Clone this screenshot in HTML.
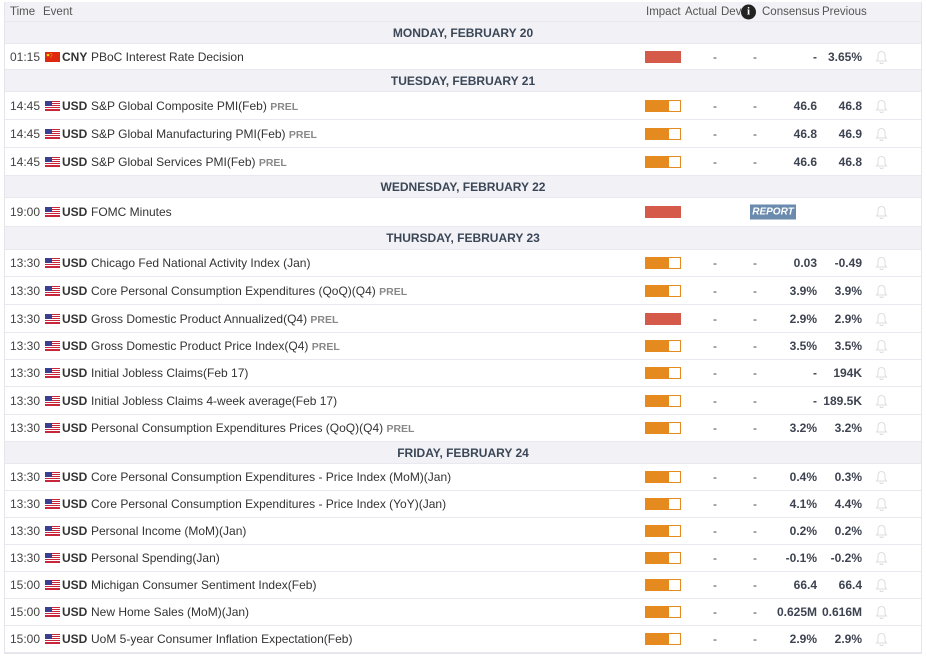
<!DOCTYPE html>
<html><head><meta charset="utf-8"><style>
*{margin:0;padding:0;box-sizing:border-box}
body{width:926px;height:657px;background:#fff;font-family:"Liberation Sans",Arial,sans-serif;color:#3d4350;position:relative;overflow:hidden}
.t{position:absolute;left:4px;width:918px;top:2px;height:652px;border:1px solid #e4e4ea;border-top:none}
.r{position:absolute;left:5px;width:916px;border-bottom:1px solid #e8e8ee}
.d{background:#f1f1f6;text-align:center;font-weight:bold;font-size:12px;color:#3b4756}
.h{background:#f1f1f6;font-size:11.5px;color:#555}
.c{position:absolute;top:50%;transform:translateY(-50%);white-space:nowrap;font-size:12px}
.h .c{font-size:11.5px}
.tm{left:5px;color:#444}
.fl{left:40px;width:15px;height:10px}
.cu{left:57px;font-weight:bold;color:#333}
.ev{left:86px;color:#333}
.ev b{color:#888;font-size:10.5px}
.bar{left:640px;width:36px;height:12px;border:1px solid #e58a1e;background:linear-gradient(90deg,#e58a1e 0 23px,#fff 23px)}
.bar.hi{background:#d55a4a;border-color:#d55a4a}
.a{left:705px;width:10px;text-align:center}
.dv{left:745px;width:10px;text-align:center}
.co{right:104px;text-align:right;font-weight:bold}
.pr{right:59px;text-align:right;font-weight:bold}
.bell{left:870px;width:13px;height:14px}
.rep{left:745px;width:46px;text-align:center;background:#6a8bad;color:#fff;font-style:italic;font-weight:bold;font-size:10px;padding:2px 0}
</style></head><body>
<div class="t"></div>
<div class="r h" style="top:2px;height:20px">
<span class="c" style="left:5px">Time</span><span class="c" style="left:38px">Event</span>
<span class="c" style="left:641px">Impact</span><span class="c" style="left:680px">Actual</span><span class="c" style="left:716px">Dev</span>
<span class="c" style="left:736px;width:15px;height:15px;border-radius:50%;background:#222;color:#fff;font-weight:bold;font-size:11px;text-align:center;line-height:15px;font-family:'Liberation Serif',serif">i</span>
<span class="c" style="left:757px">Consensus</span><span class="c" style="left:817px">Previous</span>
</div>
<div id="rows"></div>
<script>
const us='<svg class="c fl" viewBox="0 0 15 10"><rect width="15" height="10" fill="#fff"/><g fill="#c8263a"><rect y="0" width="15" height="1"/><rect y="2" width="15" height="1"/><rect y="4" width="15" height="1"/><rect y="6" width="15" height="1"/><rect y="8" width="15" height="1"/><rect y="9" width="15" height="1"/></g><rect width="7" height="5" fill="#3a3f8f"/></svg>';
const cn='<svg class="c fl" viewBox="0 0 15 10"><rect width="15" height="10" fill="#de2910"/><circle cx="3" cy="3" r="1.3" fill="#ffde00"/><circle cx="6" cy="1.5" r=".5" fill="#ffde00"/><circle cx="7" cy="3" r=".5" fill="#ffde00"/><circle cx="6" cy="5" r=".5" fill="#ffde00"/></svg>';
const bell='<svg class="c bell" viewBox="0 0 13 14"><path d="M6.5 1.5C4 1.5 3 3.5 3 6v3L1.5 11h10L10 9V6c0-2.5-1-4.5-3.5-4.5zM5 12.3a1.5 1.5 0 0 0 3 0" fill="none" stroke="#dcdcdc" stroke-width="1"/></svg>';
const R=[
['d',22,22,'MONDAY, FEBRUARY 20'],
['e',44,26,'01:15','CNY','PBoC Interest Rate Decision','',1,'-','3.65%'],
['d',70,22,'TUESDAY, FEBRUARY 21'],
['e',92,28,'14:45','USD','S&amp;P Global Composite PMI(Feb)','PREL',0,'46.6','46.8'],
['e',120,28,'14:45','USD','S&amp;P Global Manufacturing PMI(Feb)','PREL',0,'46.8','46.9'],
['e',148,28,'14:45','USD','S&amp;P Global Services PMI(Feb)','PREL',0,'46.6','46.8'],
['d',176,22,'WEDNESDAY, FEBRUARY 22'],
['e',198,29,'19:00','USD','FOMC Minutes','',1,'R',''],
['d',227,23,'THURSDAY, FEBRUARY 23'],
['e',250,27,'13:30','USD','Chicago Fed National Activity Index (Jan)','',0,'0.03','-0.49'],
['e',277,28,'13:30','USD','Core Personal Consumption Expenditures (QoQ)(Q4)','PREL',0,'3.9%','3.9%'],
['e',305,28,'13:30','USD','Gross Domestic Product Annualized(Q4)','PREL',1,'2.9%','2.9%'],
['e',333,27,'13:30','USD','Gross Domestic Product Price Index(Q4)','PREL',0,'3.5%','3.5%'],
['e',360,27,'13:30','USD','Initial Jobless Claims(Feb 17)','',0,'-','194K'],
['e',387,28,'13:30','USD','Initial Jobless Claims 4-week average(Feb 17)','',0,'-','189.5K'],
['e',415,27,'13:30','USD','Personal Consumption Expenditures Prices (QoQ)(Q4)','PREL',0,'3.2%','3.2%'],
['d',442,22,'FRIDAY, FEBRUARY 24'],
['e',464,27,'13:30','USD','Core Personal Consumption Expenditures - Price Index (MoM)(Jan)','',0,'0.4%','0.3%'],
['e',491,27,'13:30','USD','Core Personal Consumption Expenditures - Price Index (YoY)(Jan)','',0,'4.1%','4.4%'],
['e',518,27,'13:30','USD','Personal Income (MoM)(Jan)','',0,'0.2%','0.2%'],
['e',545,27,'13:30','USD','Personal Spending(Jan)','',0,'-0.1%','-0.2%'],
['e',572,27,'15:00','USD','Michigan Consumer Sentiment Index(Feb)','',0,'66.4','66.4'],
['e',599,27,'15:00','USD','New Home Sales (MoM)(Jan)','',0,'0.625M','0.616M'],
['e',626,27,'15:00','USD','UoM 5-year Consumer Inflation Expectation(Feb)','',0,'2.9%','2.9%']];
let h='';
for(const r of R){
 if(r[0]=='d'){h+=`<div class="r d" style="top:${r[1]}px;height:${r[2]}px;line-height:${r[2]}px">${r[3]}</div>`;continue;}
 let mid=r[8]=='R'?`<span class="c rep">REPORT</span>`:`<span class="c a">-</span><span class="c dv">-</span><span class="c co">${r[8]}</span><span class="c pr">${r[9]}</span>`;
 h+=`<div class="r" style="top:${r[1]}px;height:${r[2]}px"><span class="c tm">${r[3]}</span>${r[4]=='CNY'?cn:us}<span class="c cu">${r[4]}</span><span class="c ev">${r[5]}${r[6]?' <b>'+r[6]+'</b>':''}</span><span class="c bar${r[7]?' hi':''}"></span>${mid}${bell}</div>`;
}
document.getElementById('rows').innerHTML=h;
</script>
</body></html>
